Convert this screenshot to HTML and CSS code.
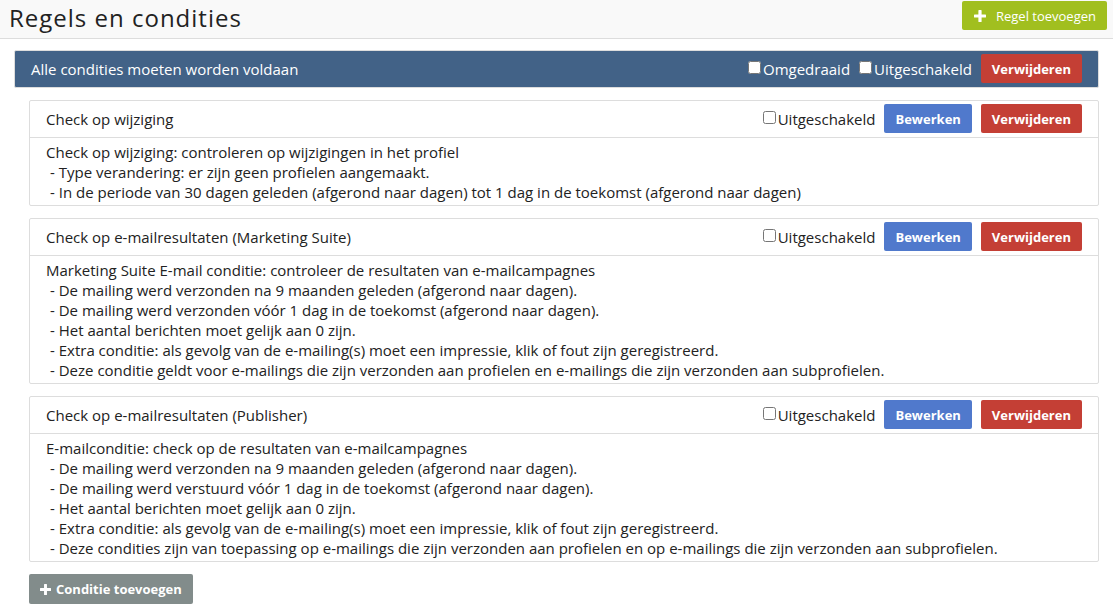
FILE: index.html
```html
<!DOCTYPE html>
<html lang="nl">
<head>
<meta charset="utf-8">
<title>Regels en condities</title>
<link rel="stylesheet" href="styles.css">
</head>
<body>
<header class="topbar">
  <h1 class="title">Regels en condities</h1>
  <button class="btn add-rule" type="button"><svg class="plus" viewBox="0 0 12 12" aria-hidden="true"><path d="M5 0h2q.6 0 .6.6v3.8h3.8q.6 0 .6.6v2q0 .6-.6.6H7.6v3.8q0 .6-.6.6H5q-.6 0-.6-.6V7.6H.6Q0 7.6 0 7V5q0-.6.6-.6h3.8V.6Q4.4 0 5 0z"/></svg>Regel toevoegen</button>
</header>
<main class="content">
  <section class="rule">
    <h2 class="name">Alle condities moeten worden voldaan</h2>
    <div class="actions">
      <label class="check"><input type="checkbox">Omgedraaid</label>
      <label class="check"><input type="checkbox">Uitgeschakeld</label>
      <button class="btn danger" type="button">Verwijderen</button>
    </div>
  </section>
  <div class="conditions">
    <article class="card">
      <div class="card-head">
        <h3 class="name">Check op wijziging</h3>
        <div class="actions">
          <label class="check"><input type="checkbox">Uitgeschakeld</label>
          <button class="btn primary" type="button">Bewerken</button>
          <button class="btn danger" type="button">Verwijderen</button>
        </div>
      </div>
      <div class="card-body">
        <p>Check op wijziging: controleren op wijzigingen in het profiel</p>
        <ul>
          <li>- Type verandering: er zijn geen profielen aangemaakt.</li>
          <li>- In de periode van 30 dagen geleden (afgerond naar dagen) tot 1 dag in de toekomst (afgerond naar dagen)</li>
        </ul>
      </div>
    </article>
    <article class="card">
      <div class="card-head">
        <h3 class="name">Check op e-mailresultaten (Marketing Suite)</h3>
        <div class="actions">
          <label class="check"><input type="checkbox">Uitgeschakeld</label>
          <button class="btn primary" type="button">Bewerken</button>
          <button class="btn danger" type="button">Verwijderen</button>
        </div>
      </div>
      <div class="card-body">
        <p>Marketing Suite E-mail conditie: controleer de resultaten van e-mailcampagnes</p>
        <ul>
          <li>- De mailing werd verzonden na 9 maanden geleden (afgerond naar dagen).</li>
          <li>- De mailing werd verzonden vóór 1 dag in de toekomst (afgerond naar dagen).</li>
          <li>- Het aantal berichten moet gelijk aan 0 zijn.</li>
          <li>- Extra conditie: als gevolg van de e-mailing(s) moet een impressie, klik of fout zijn geregistreerd.</li>
          <li>- Deze conditie geldt voor e-mailings die zijn verzonden aan profielen en e-mailings die zijn verzonden aan subprofielen.</li>
        </ul>
      </div>
    </article>
    <article class="card">
      <div class="card-head">
        <h3 class="name">Check op e-mailresultaten (Publisher)</h3>
        <div class="actions">
          <label class="check"><input type="checkbox">Uitgeschakeld</label>
          <button class="btn primary" type="button">Bewerken</button>
          <button class="btn danger" type="button">Verwijderen</button>
        </div>
      </div>
      <div class="card-body">
        <p>E-mailconditie: check op de resultaten van e-mailcampagnes</p>
        <ul>
          <li>- De mailing werd verzonden na 9 maanden geleden (afgerond naar dagen).</li>
          <li>- De mailing werd verstuurd vóór 1 dag in de toekomst (afgerond naar dagen).</li>
          <li>- Het aantal berichten moet gelijk aan 0 zijn.</li>
          <li>- Extra conditie: als gevolg van de e-mailing(s) moet een impressie, klik of fout zijn geregistreerd.</li>
          <li>- Deze condities zijn van toepassing op e-mailings die zijn verzonden aan profielen en op e-mailings die zijn verzonden aan subprofielen.</li>
        </ul>
      </div>
    </article>
    <button class="btn add-condition" type="button"><svg class="plus" viewBox="0 0 12 12" aria-hidden="true"><path d="M5 0h2q.6 0 .6.6v3.8h3.8q.6 0 .6.6v2q0 .6-.6.6H7.6v3.8q0 .6-.6.6H5q-.6 0-.6-.6V7.6H.6Q0 7.6 0 7V5q0-.6.6-.6h3.8V.6Q4.4 0 5 0z"/></svg>Conditie toevoegen</button>
  </div>
</main>
</body>
</html>
```

FILE: styles.css
```css
* { box-sizing: border-box; }
body {
  margin: 0;
  background: #fff;
  color: #222;
  font: 15px/20px "Open Sans", sans-serif;
}
h1, h2, h3, p, ul { margin: 0; padding: 0; font-weight: 400; }
ul { list-style: none; }
.topbar {
  display: flex;
  justify-content: space-between;
  align-items: flex-start;
  padding: 1px 6px 3px 9px;
  background: #f9f9f9;
  border-bottom: 1px solid #ddd;
}
.title { font-size: 24px; line-height: 34px; letter-spacing: 1px; }
.btn {
  display: inline-flex;
  align-items: center;
  padding: 0 11px;
  height: 29px;
  border: 0;
  border-radius: 2px;
  color: #fff;
  font: 700 13px/20px "Open Sans", sans-serif;
}
.primary { background: #5079cc; }
.danger { background: #c43f35; }
.add-rule { background: #a1bf1f; padding: 0 11px 0 12px; font-weight: 400; gap: 10px; }
.add-condition { background: #828c8b; height: 30px; gap: 5px; }
.plus { width: 12px; height: 12px; fill: currentColor; }
.add-condition .plus { width: 11px; height: 11px; }
.content { padding: 12px 14px; }
.rule, .card-head {
  display: flex;
  justify-content: space-between;
  align-items: center;
  padding: 0 16px;
}
.rule {
  height: 38px;
  margin-top: -1px;
  background: #426287;
  border: 1px solid #ddd;
  border-radius: 2px;
  color: #fff;
}
.name { font-size: 15px; }
.actions { display: flex; align-items: center; gap: 9px; padding-bottom: 1px; }
.check { display: flex; align-items: center; gap: 2px; }
.check input { width: 13px; height: 13px; margin: 0 0 2px; }
.conditions {
  display: flex;
  flex-direction: column;
  align-items: flex-start;
  gap: 12px;
  padding: 12px 0 0 15px;
}
.card { width: 100%; border: 1px solid #ddd; border-radius: 2px; }
.card-head { height: 37px; border-bottom: 1px solid #ddd; }
.card-body { padding: 4px 16px 3px; }
.card-body li { padding-left: 4px; }
```
